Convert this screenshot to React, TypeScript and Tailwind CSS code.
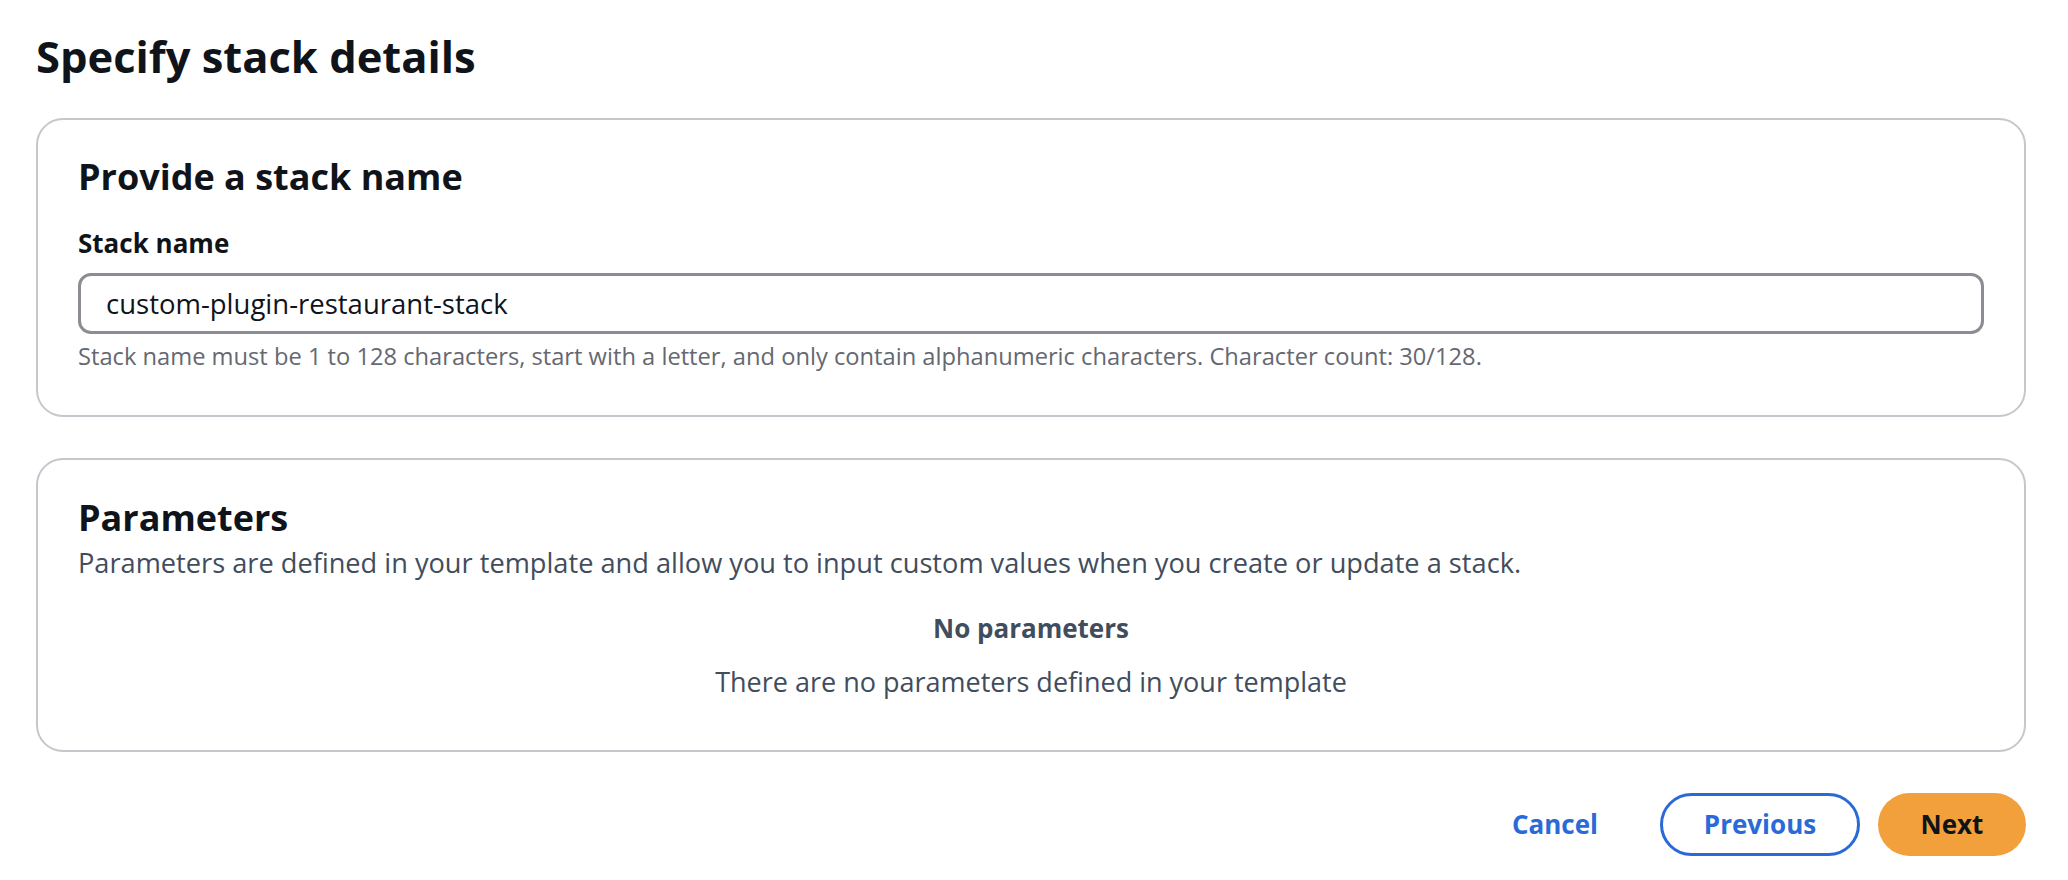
const font = { fontFamily: '"Open Sans", "Noto Sans", sans-serif' };

const App = () => {
  return (
    <div className="min-h-screen bg-white pl-[36px] pr-[42px] pt-[31px] text-[#0f141a]" style={font}>
      <h1 className="mb-[35px] text-[43.5px] font-bold leading-[52px]">Specify stack details</h1>

      <section className="rounded-[27px] border-2 border-[#c6c6cd] px-[40px] pb-[44px] pt-[35px]">
        <h2 className="text-[36px] font-bold leading-[44px]">Provide a stack name</h2>
        <label className="mt-[28px] block text-[26px] font-bold leading-[32px]">Stack name</label>
        <div className="mt-[14px] flex h-[61px] items-center rounded-[13px] border-[3px] border-[#8c8c94] px-[25px] text-[27.5px] leading-[34px]">
          custom-plugin-restaurant-stack
        </div>
        <p className="mt-[7px] text-[23.7px] leading-[30px] text-[#656871]">
          Stack name must be 1 to 128 characters, start with a letter, and only contain alphanumeric characters. Character
          count: 30/128.
        </p>
      </section>

      <section className="mt-[41px] rounded-[27px] border-2 border-[#c6c6cd] px-[40px] pb-[51px] pt-[36px]">
        <h2 className="text-[36px] font-bold leading-[44px]">Parameters</h2>
        <p className="mt-[6px] text-[27.2px] leading-[34px] text-[#414d5c]">
          Parameters are defined in your template and allow you to input custom values when you create or update a stack.
        </p>
        <div className="mt-[32px] flex flex-col items-center text-[#414d5c]">
          <p className="text-[26px] font-bold leading-[32px]">No parameters</p>
          <p className="mt-[21px] text-[27px] leading-[34px]">There are no parameters defined in your template</p>
        </div>
      </section>

      <div className="mt-[41px] flex items-center justify-end gap-[18px]">
        <button className="mr-[14px] h-[63px] px-[30px] text-[26px] font-bold text-[#2a6ad8]">Cancel</button>
        <button className="h-[63px] w-[200px] rounded-full border-[3px] border-[#2a6ad8] text-[26px] font-bold text-[#2a6ad8]">
          Previous
        </button>
        <button className="h-[63px] w-[148px] rounded-full bg-[#f2a03b] text-[26px] font-bold text-[#0f141a]">Next</button>
      </div>
    </div>
  );
};

export default App;
